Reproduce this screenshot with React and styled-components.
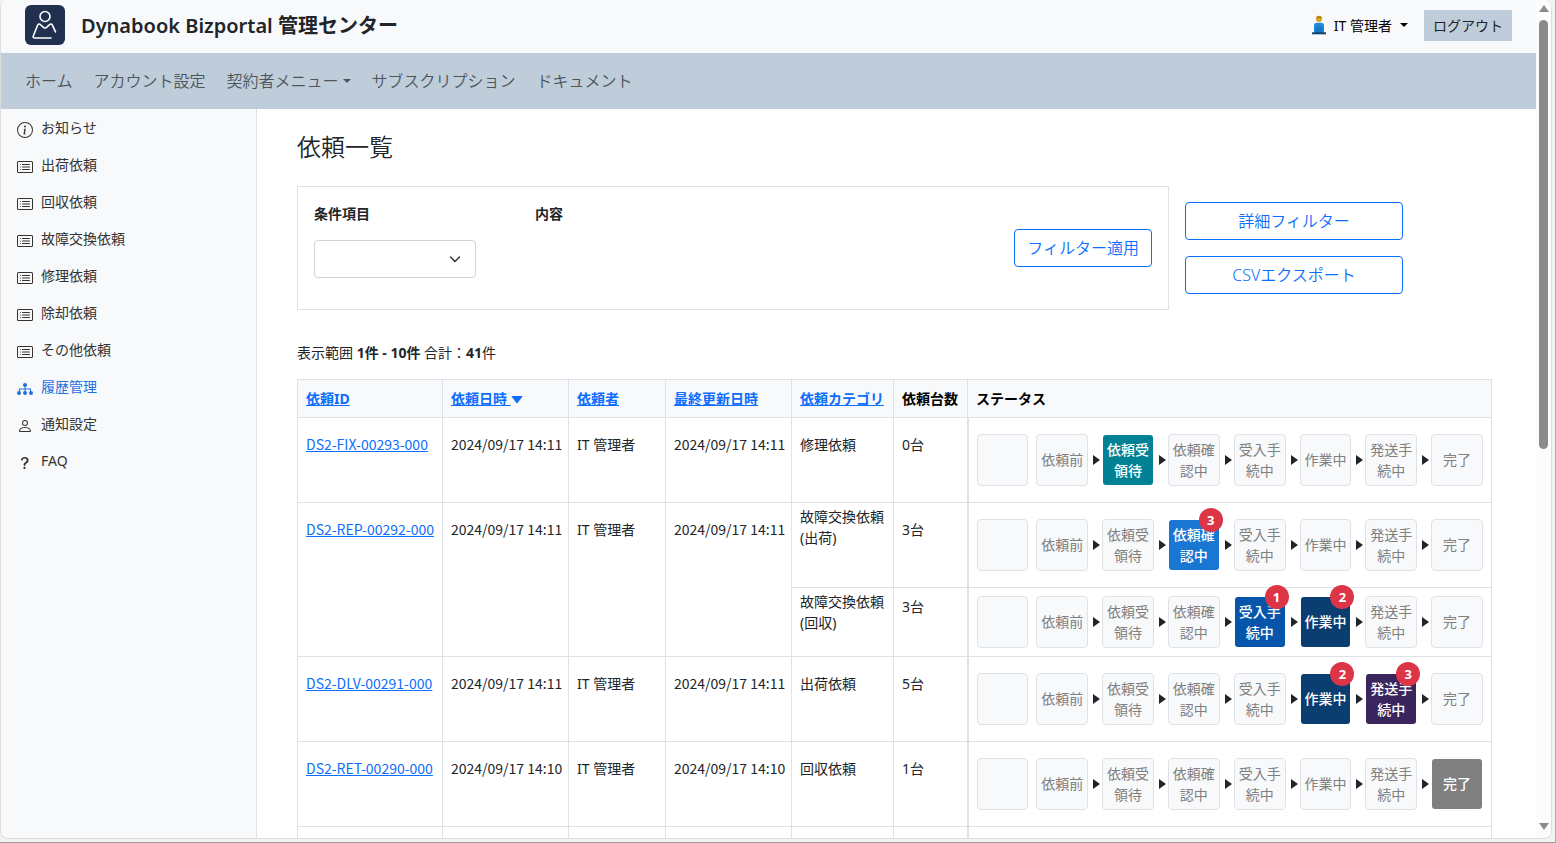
import React from "react"
import styled, { createGlobalStyle } from "styled-components"
import {
  BsInfoCircle,
  BsCardList,
  BsPerson,
  BsQuestionLg,
} from "react-icons/bs"

const GlobalStyle = createGlobalStyle`
  * {
    box-sizing: border-box;
  }
  body {
    margin: 0;
    color: #212529;
    font-family: "Noto Sans", "Noto Sans CJK JP", sans-serif;
    font-size: 14px;
    line-height: 21px;
  }
  button, select {
    font-family: inherit;
  }
`

const Frame = styled.div`
  height: 100vh;
  padding: 0 3px 3px 0;
  background: #f3f3f3;
  border-right: 1px solid #a3adb8;
  border-bottom: 1px solid #999999;
`

const Viewport = styled.div`
  height: 100%;
  display: flex;
  overflow: hidden;
  background: #ffffff;
  border: 1px solid #dddddd;
  border-top: 0;
  border-radius: 8px;
`

const Page = styled.div`
  flex: 1;
  min-width: 0;
  display: flex;
  flex-direction: column;
`

const Scrollbar = styled.div`
  width: 15px;
  padding: 5px 0 8px;
  display: flex;
  flex-direction: column;
  align-items: center;
  gap: 8px;
  background: #fcfcfc;
`

const Thumb = styled.div`
  width: 9px;
  height: 52%;
  margin-bottom: auto;
  border-radius: 5px;
  background: #8b8b8b;
`

const ScrollArrow = styled.div`
  border: 5px solid transparent;
  border-top: 0;
  border-bottom: 7px solid #8b8b8b;
  transform: ${props => (props.$down ? "rotate(180deg)" : "none")};
`

const Header = styled.header`
  height: 53px;
  flex-shrink: 0;
  padding: 0 24px 3px;
  display: flex;
  align-items: center;
  background: #f8f9fb;
  h1 {
    margin: 0 auto 0 16px;
    padding-top: 2px;
    font-size: 20px;
    line-height: 30px;
    font-weight: 600;
  }
`

const UserButton = styled.button`
  display: flex;
  align-items: center;
  gap: 8px;
  margin-right: 16px;
  padding: 0;
  border: 0;
  background: none;
  color: #000000;
  font-size: 14px;
  line-height: 21px;
`

const LogoutButton = styled.button`
  height: 31px;
  padding: 0 9px;
  border: 0;
  background: #bfccda;
  color: #212529;
  font-size: 14px;
  line-height: 21px;
`

const Caret = styled.span`
  display: inline-block;
  border: 4px solid transparent;
  border-top-color: currentColor;
  border-bottom: 0;
`

const Nav = styled.nav`
  height: 56px;
  flex-shrink: 0;
  padding: 0 24px;
  display: flex;
  align-items: center;
  gap: 21px;
  background: #bfccda;
  a {
    display: flex;
    align-items: center;
    gap: 4px;
    color: #4c545c;
    font-size: 16px;
    font-weight: 350;
    line-height: 24px;
    text-decoration: none;
  }
`

const Body = styled.div`
  flex: 1;
  min-height: 0;
  display: flex;
`

const Sidebar = styled.aside`
  width: 256px;
  flex-shrink: 0;
  background: #f8f9fb;
  border-right: 1px solid #dee2e6;
`

const SideLink = styled.a`
  display: flex;
  gap: 8px;
  padding: 8px 16px;
  color: ${props => (props.$active ? "#2470dc" : "#333333")};
  text-decoration: none;
  svg {
    width: 16px;
    height: 16px;
    margin-top: 5px;
  }
`

const Main = styled.main`
  flex: 1;
  min-width: 0;
  padding: 23px 44px 0 40px;
  overflow: hidden;
  h2 {
    margin: 0 0 24px;
    font-size: 24px;
    font-weight: 350;
    line-height: 30px;
  }
`

const FilterRow = styled.div`
  display: grid;
  grid-template-columns: 4fr 1fr;
  gap: 16px;
  margin-right: 89px;
`

const FilterBox = styled.form`
  height: 124px;
  padding: 16px;
  display: flex;
  border: 1px solid #dee2e6;
`

const Field = styled.div`
  width: 221px;
  display: flex;
  flex-direction: column;
  align-items: flex-start;
  gap: 16px;
  label, span {
    font-weight: 700;
  }
`

const SelectWrap = styled.div`
  width: 162px;
  height: 38px;
  display: grid;
  align-items: center;
  select, svg {
    grid-area: 1 / 1;
  }
  select {
    width: 100%;
    height: 38px;
    appearance: none;
    border: 1px solid #ced4da;
    border-radius: 4px;
    background: #ffffff;
  }
  svg {
    justify-self: end;
    margin-right: 15px;
    pointer-events: none;
  }
`

const OutlineButton = styled.button`
  height: 38px;
  padding: 0 12px;
  border: 1px solid #0d6efd;
  border-radius: 4px;
  background: #ffffff;
  color: #0d6efd;
  font-size: 16px;
  font-weight: 350;
  line-height: 24px;
  white-space: nowrap;
`

const ApplyButton = styled(OutlineButton)`
  margin-left: auto;
  align-self: center;
`

const Actions = styled.div`
  display: flex;
  flex-direction: column;
  gap: 16px;
  padding-top: 16px;
`

const Summary = styled.p`
  margin: 32px 0 16px;
`

const Table = styled.table`
  width: 100%;
  table-layout: fixed;
  border-collapse: collapse;
  th, td {
    border: 1px solid #dee2e6;
    text-align: left;
    vertical-align: top;
    white-space: nowrap;
  }
  th {
    height: 38px;
    padding: 8px;
    background: #f8f9fb;
    color: #000000;
    font-weight: 700;
  }
  a {
    color: #0d6efd;
  }
`

const Cell = styled.td`
  padding: ${props => props.$top || 16}px 8px 0;
`

const CodeCell = styled(Cell)`
  font-family: "Noto Sans CJK JP", sans-serif;
`

const StatusCell = styled.td`
  padding: ${props => (props.$compact ? 8 : 16)}px 8px;
  && {
    border-left: 2px solid #dee2e6;
  }
`

const Steps = styled.div`
  display: flex;
  align-items: center;
`

const Step = styled.div`
  position: relative;
  flex: 1 1 0;
  height: 52px;
  padding-bottom: 1px;
  display: flex;
  align-items: center;
  justify-content: center;
  border: 1px solid ${props => (props.$color ? "transparent" : "#dee2e6")};
  border-radius: 4px;
  background: ${props => props.$color || "#f8f9fb"};
  background-clip: padding-box;
  color: ${props => (props.$color ? "#ffffff" : "#808080")};
  font-weight: ${props => (props.$color ? 500 : 400)};
  text-align: center;
  white-space: normal;
  word-break: break-all;
  &:first-child {
    margin-right: 8px;
  }
`

const StepArrow = styled.span`
  margin: 0 2px 0 5px;
  border: 5px solid transparent;
  border-left: 7px solid #212529;
  border-right: 0;
`

const Badge = styled.span`
  position: absolute;
  top: -12px;
  right: -4px;
  width: 24px;
  height: 24px;
  border-radius: 50%;
  background: #dc3545;
  color: #ffffff;
  font-size: 13px;
  font-weight: 700;
  line-height: 24px;
`

const FillerCell = styled.td`
  height: 85px;
`

const Logo = () => (
  <svg width="40" height="40" viewBox="0 0 40 40" fill="none">
    <rect width="40" height="40" rx="6" fill="#22304f" />
    <g stroke="#ffffff" strokeWidth="1.6" strokeLinecap="round" strokeLinejoin="round">
      <circle cx="20" cy="11.5" r="5" />
      <path d="M26 33H10c-1.600 0-2.200-.7-1.700-2L12.500 20.500c.8-1.700 2-1.900 3.200-.7l3.300 3 1 .2 1-.2 3.300-3c1.300-1.200 2.500-.9 3.200.6l3 6.500" />
    </g>
  </svg>
)

const UserIcon = () => (
  <svg width="14" height="20" viewBox="0 0 14 20">
    <circle cx="7" cy="4" r="3" fill="#d9a520" />
    <path d="M4.200 3.200C4.500 1.500 5.600.8 7 .8s2.500.7 2.800 2.400z" fill="#b8860b" />
    <path d="M2 18v-7c0-2 1.200-3.200 3-3.200h4c1.800 0 3 1.200 3 3.200v7z" fill="#1e88dc" />
    <path d="M3.500 12h7v6h-7z" fill="#1976c8" />
    <path d="M0 17.300h14v2H0z" fill="#14406b" />
  </svg>
)

const TreeIcon = () => (
  <svg viewBox="0 0 16 16" fill="currentColor">
    <circle cx="8" cy="4" r="2" />
    <path d="M7.500 5h1v2.500H14V11h-1V8.500H8.500V11h-1V8.500H3V11H2V7.500h5.500z" />
    <circle cx="2" cy="12" r="2" />
    <circle cx="8" cy="12" r="2" />
    <circle cx="14" cy="12" r="2" />
  </svg>
)

const SortIcon = () => (
  <svg width="12" height="8" viewBox="0 0 12 8">
    <path d="M1 .5h10L6 7z" fill="#0d6efd" stroke="#0d6efd" strokeLinejoin="round" />
  </svg>
)

const sideItems = [
  ["お知らせ", BsInfoCircle],
  ["出荷依頼", BsCardList],
  ["回収依頼", BsCardList],
  ["故障交換依頼", BsCardList],
  ["修理依頼", BsCardList],
  ["除却依頼", BsCardList],
  ["その他依頼", BsCardList],
  ["履歴管理", TreeIcon],
  ["通知設定", BsPerson],
  ["FAQ", BsQuestionLg],
]

const stepNames = [
  "依頼前",
  "依頼受領待",
  "依頼確認中",
  "受入手続中",
  "作業中",
  "発送手続中",
  "完了",
]

const stepColors = [
  "#6c757d",
  "#008294",
  "#1976d2",
  "#0655aa",
  "#0a3d70",
  "#3a265c",
  "#808080",
]

// active maps a step index to its badge count, 0 for no badge
const requests = [
  {
    id: "DS2-FIX-00293-000",
    date: "2024/09/17 14:11",
    items: [{ category: "修理依頼", count: 0, active: { 1: 0 } }],
  },
  {
    id: "DS2-REP-00292-000",
    date: "2024/09/17 14:11",
    items: [
      { category: "故障交換依頼", note: "(出荷)", count: 3, active: { 2: 3 } },
      { category: "故障交換依頼", note: "(回収)", count: 3, active: { 3: 1, 4: 2 } },
    ],
  },
  {
    id: "DS2-DLV-00291-000",
    date: "2024/09/17 14:11",
    items: [{ category: "出荷依頼", count: 5, active: { 4: 2, 5: 3 } }],
  },
  {
    id: "DS2-RET-00290-000",
    date: "2024/09/17 14:10",
    items: [{ category: "回収依頼", count: 1, active: { 6: 0 } }],
  },
]

const StatusSteps = ({ active }) => (
  <Steps>
    <Step />
    {stepNames.map((name, i) => (
      <React.Fragment key={name}>
        {i > 0 && <StepArrow />}
        <Step $color={i in active ? stepColors[i] : undefined}>
          {name}
          {active[i] > 0 && <Badge>{active[i]}</Badge>}
        </Step>
      </React.Fragment>
    ))}
  </Steps>
)

const RequestRows = ({ request }) => {
  const { id, date, items } = request
  const span = items.length
  return items.map((item, i) => (
    <tr key={i}>
      {i === 0 && (
        <>
          <CodeCell rowSpan={span}>
            <a href={`#${id}`}>{id}</a>
          </CodeCell>
          <CodeCell rowSpan={span}>{date}</CodeCell>
          <Cell rowSpan={span}>IT 管理者</Cell>
          <CodeCell rowSpan={span}>{date}</CodeCell>
        </>
      )}
      <Cell $top={item.note ? 3 : 16}>
        {item.category}
        {item.note && <br />}
        {item.note}
      </Cell>
      <Cell $top={i > 0 ? 8 : 16}>{item.count}台</Cell>
      <StatusCell $compact={i > 0}>
        <StatusSteps active={item.active} />
      </StatusCell>
    </tr>
  ))
}

const App = () => (
  <>
    <GlobalStyle />
    <Frame>
      <Viewport>
        <Page>
          <Header>
            <Logo />
            <h1>Dynabook Bizportal 管理センター</h1>
            <UserButton type="button">
              <UserIcon />
              IT 管理者
              <Caret />
            </UserButton>
            <LogoutButton type="button">ログアウト</LogoutButton>
          </Header>
          <Nav>
            <a href="#home">ホーム</a>
            <a href="#account">アカウント設定</a>
            <a href="#contract">
              契約者メニュー
              <Caret />
            </a>
            <a href="#subscription">サブスクリプション</a>
            <a href="#document">ドキュメント</a>
          </Nav>
          <Body>
            <Sidebar>
              {sideItems.map(([label, Icon]) => (
                <SideLink key={label} href="#menu" $active={label === "履歴管理"}>
                  <Icon />
                  {label}
                </SideLink>
              ))}
            </Sidebar>
            <Main>
              <h2>依頼一覧</h2>
              <FilterRow>
                <FilterBox>
                  <Field>
                    <label htmlFor="condition">条件項目</label>
                    <SelectWrap>
                      <select id="condition" defaultValue="">
                        <option value="" />
                      </select>
                      <svg width="12" height="12" viewBox="0 0 12 12" fill="none">
                        <path
                          d="M1.500 4L6 8.500 10.500 4"
                          stroke="#343a40"
                          strokeWidth="1.500"
                          strokeLinecap="round"
                          strokeLinejoin="round"
                        />
                      </svg>
                    </SelectWrap>
                  </Field>
                  <Field>
                    <span>内容</span>
                  </Field>
                  <ApplyButton type="button">フィルター適用</ApplyButton>
                </FilterBox>
                <Actions>
                  <OutlineButton type="button">詳細フィルター</OutlineButton>
                  <OutlineButton type="button">CSVエクスポート</OutlineButton>
                </Actions>
              </FilterRow>
              <Summary>
                表示範囲 <b>1件 - 10件</b> 合計：<b>41</b>件
              </Summary>
              <Table>
                <colgroup>
                  <col width="145" />
                  <col width="126" />
                  <col width="97" />
                  <col width="126" />
                  <col width="102" />
                  <col width="74" />
                  <col />
                </colgroup>
                <thead>
                  <tr>
                    <th><a href="#id">依頼ID</a></th>
                    <th><a href="#date">依頼日時 <SortIcon /></a></th>
                    <th><a href="#user">依頼者</a></th>
                    <th><a href="#updated">最終更新日時</a></th>
                    <th><a href="#category">依頼カテゴリ</a></th>
                    <th>依頼台数</th>
                    <th>ステータス</th>
                  </tr>
                </thead>
                <tbody>
                  {requests.map(request => (
                    <RequestRows key={request.id} request={request} />
                  ))}
                  <tr>
                    {[0, 1, 2, 3, 4, 5].map(i => (
                      <FillerCell key={i} />
                    ))}
                    <StatusCell />
                  </tr>
                </tbody>
              </Table>
            </Main>
          </Body>
        </Page>
        <Scrollbar>
          <ScrollArrow />
          <Thumb />
          <ScrollArrow $down />
        </Scrollbar>
      </Viewport>
    </Frame>
  </>
)

export default App
